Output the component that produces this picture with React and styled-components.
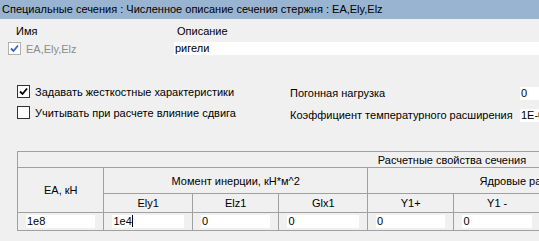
import React from 'react';
import styled, { createGlobalStyle } from 'styled-components';

const Global = createGlobalStyle`
  html, body {
    margin: 0;
    padding: 0;
    background: #f0f0f0;
    overflow: hidden;
  }
  body {
    font-family: "Liberation Sans", Arial, sans-serif;
    font-size: 11px;
    color: #000;
  }
`;

const Window = styled.div`
  width: 539px;
  height: 241px;
  display: flex;
  flex-direction: column;
  overflow: hidden;
`;

const TitleBar = styled.div`
  height: 19px;
  line-height: 19px;
  background: #99b4d1;
  padding-left: 2px;
  white-space: nowrap;
`;

const NameGrid = styled.div`
  display: grid;
  grid-template-columns: 174px 1fr;
  grid-template-rows: 18px 13px;
  row-gap: 2px;
  margin-top: 3px;
`;

const HeadCell = styled.div`
  padding-left: ${p => p.$pad}px;
  line-height: 18px;
`;

const NameCell = styled.div`
  display: flex;
  align-items: center;
  gap: 5px;
  padding-left: 8px;
  color: #8d8d8d;
`;

const DescField = styled.div`
  background: #fff;
  line-height: 13px;
  padding-left: 1px;
`;

const Box = styled.span`
  width: 11px;
  height: 11px;
  border: 1px solid ${p => (p.$disabled ? '#b0b0b0' : '#333')};
  background: #fff;
  display: inline-flex;
  align-items: center;
  justify-content: center;
  flex: none;
`;

const Separator = styled.div`
  height: 1px;
  background: #a0a0a0;
  margin: 23px 0 0 11px;
`;

const Options = styled.div`
  display: flex;
  padding-left: 17px;
  margin-top: 3px;
`;

const Column = styled.div`
  display: flex;
  flex-direction: column;
  width: ${p => p.$w}px;
  flex: ${p => (p.$w ? 'none' : '1')};
  padding-top: ${p => p.$top}px;
  gap: ${p => p.$gap}px;
  min-width: 0;
`;

const CheckRow = styled.label`
  display: flex;
  align-items: center;
  gap: 5px;
  height: 15px;
  white-space: nowrap;
`;

const Label = styled.div`
  height: 15px;
  line-height: 15px;
  white-space: nowrap;
`;

const ValueField = styled.div`
  background: #fff;
  height: 13px;
  line-height: 13px;
  margin: 1px 0;
  padding-left: 1px;
  white-space: nowrap;
  overflow: hidden;
`;

const Grid = styled.table`
  margin: 28px 0 0 17px;
  border-collapse: collapse;
  table-layout: fixed;
  width: 870px;
  flex: none;
`;

const Th = styled.th`
  font-weight: normal;
  border: 1px solid #a0a0a0;
  height: ${p => p.$h}px;
  padding: 0;
  text-align: center;
  vertical-align: middle;
  white-space: nowrap;
  overflow: hidden;
`;

const Td = styled.td`
  border: 1px solid #a0a0a0;
  height: 15px;
  padding: 1px 8px 1px 8px;
`;

const CellInput = styled.div`
  background: #fff;
  height: 13px;
  line-height: 13px;
  padding-left: 1px;
  white-space: nowrap;
`;

const Caret = styled.span`
  display: inline-block;
  width: 1px;
  height: 12px;
  background: #000;
  vertical-align: -2px;
`;

const BottomLine = styled.div`
  height: 1px;
  background: #a0a0a0;
  margin: 12px 0 0 17px;
`;

const Check = ({ disabled, checked }) => (
  <Box $disabled={disabled}>
    {checked && (
      <svg width="9" height="9" viewBox="0 0 9 9">
        <path
          d="M1 4.5 L3.5 7 L8 1.5"
          fill="none"
          stroke={disabled ? '#3c63b8' : '#000'}
          strokeWidth="1.8"
        />
      </svg>
    )}
  </Box>
);

const values = ['1e8', '1e4', '0', '0', '0', '0', '', '', '', ''];

export default function App() {
  return (
    <Window>
      <Global />
      <TitleBar>Специальные сечения : Численное описание сечения стержня : EA,Ely,Elz</TitleBar>

      <NameGrid>
        <HeadCell $pad={16}>Имя</HeadCell>
        <HeadCell $pad={3}>Описание</HeadCell>
        <NameCell>
          <Check disabled checked />
          EA,Ely,Elz
        </NameCell>
        <DescField>ригели</DescField>
      </NameGrid>

      <Separator />

      <Options>
        <Column $w={273} $top={3} $gap={6}>
          <CheckRow>
            <Check checked />
            Задавать жесткостные характеристики
          </CheckRow>
          <CheckRow>
            <Check />
            Учитывать при расчете влияние сдвига
          </CheckRow>
        </Column>
        <Column $w={230} $top={5} $gap={7}>
          <Label>Погонная нагрузка</Label>
          <Label>Коэффициент температурного расширения</Label>
        </Column>
        <Column $top={5} $gap={7}>
          <ValueField>0</ValueField>
          <ValueField>1E-005</ValueField>
        </Column>
      </Options>

      <Grid>
        <colgroup>
          {values.map((_, i) => (
            <col key={i} style={{ width: i === 1 || i === 3 ? 88 : 86 }} />
          ))}
        </colgroup>
        <thead>
          <tr>
            <Th $h={15} colSpan={10}>Расчетные свойства сечения</Th>
          </tr>
          <tr>
            <Th $h={25} rowSpan={2}>EA, кН</Th>
            <Th $h={25} colSpan={3}>Момент инерции, кН*м^2</Th>
            <Th $h={25} colSpan={4}>Ядровые расстояния, м</Th>
            <Th $h={25} colSpan={2}>Площадь сдвига</Th>
          </tr>
          <tr>
            <Th $h={18}>Ely1</Th>
            <Th $h={18}>Elz1</Th>
            <Th $h={18}>Glx1</Th>
            <Th $h={18}>Y1+</Th>
            <Th $h={18}>Y1 -</Th>
            <Th $h={18}>Z1+</Th>
            <Th $h={18}>Z1 -</Th>
            <Th $h={18}>Fy</Th>
            <Th $h={18}>Fz</Th>
          </tr>
        </thead>
        <tbody>
          <tr>
            {values.map((v, i) => (
              <Td key={i}>
                <CellInput>
                  {v}
                  {i === 1 && <Caret />}
                </CellInput>
              </Td>
            ))}
          </tr>
        </tbody>
      </Grid>

      <BottomLine />
    </Window>
  );
}
